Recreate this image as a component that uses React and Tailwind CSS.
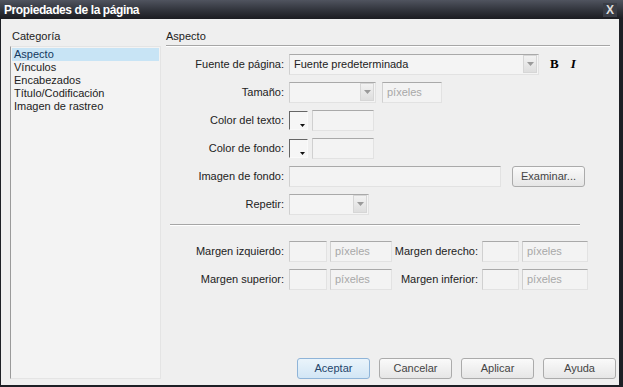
import React from "react";

const font = { fontFamily: '"Liberation Sans", Arial, sans-serif' };

function Field({ w, text, disabled }) {
  return (
    <div
      className={`h-[21px] ${w} border border-[#e2e2e2] border-t-[#a9a9a9] border-l-[#d0d0d0] bg-[#f3f3f3] flex items-center px-[4px] text-[11px] ${
        disabled ? "text-[#a8a8a8]" : "text-[#222]"
      }`}
    >
      {text}
    </div>
  );
}

function Select({ w, text }) {
  return (
    <div
      className={`h-[21px] ${w} border border-[#e2e2e2] border-t-[#a9a9a9] border-l-[#d0d0d0] bg-[#f4f4f4] flex items-center text-[11px] text-[#222]`}
    >
      <span className="flex-1 px-[4px]">{text}</span>
      <div className="w-[14px] h-[18px] mr-[1px] bg-gradient-to-b from-[#f2f2f2] to-[#dedede] border border-[#d6d6d6] flex items-center justify-center">
        <svg width="7" height="4" viewBox="0 0 7 4">
          <path d="M0 0h7L3.5 4z" fill="#9a9a9a" />
        </svg>
      </div>
    </div>
  );
}

function Swatch() {
  return (
    <div className="relative w-[19px] h-[19px] border border-[#fafafa] border-l-[#666] border-t-[#666] bg-[#f6f6f6]">
      <svg className="absolute right-[2px] bottom-[2px]" width="5" height="3" viewBox="0 0 5 3">
        <path d="M0 0h5L2.5 3z" fill="#111" />
      </svg>
    </div>
  );
}

function Button({ children, primary }) {
  return (
    <button
      className={`w-[73px] h-[21px] rounded-[3px] border text-[11px] ${
        primary
          ? "border-[#8fb4d8] bg-gradient-to-b from-[#eaf4fb] to-[#d2e6f5] text-[#24456b]"
          : "border-[#ababab] bg-gradient-to-b from-[#fafafa] to-[#e6e6e6] text-[#444]"
      }`}
    >
      {children}
    </button>
  );
}

function Row({ label, children }) {
  return (
    <div className="h-[28px] flex items-center">
      <div className="w-[122px] text-right pr-[4px] text-[11px] text-[#222] whitespace-nowrap">{label}</div>
      <div className="flex items-center ml-[1px]">{children}</div>
    </div>
  );
}

export default function App() {
  const categories = ["Aspecto", "Vínculos", "Encabezados", "Título/Codificación", "Imagen de rastreo"];

  return (
    <div className="w-[623px] h-[387px] bg-[#1d1f25] flex flex-col overflow-hidden" style={font}>
      {/* title bar */}
      <div className="h-[19px] flex items-center justify-between bg-gradient-to-b from-[#50545f] via-[#33363e] to-[#1b1c21] pl-[4px] pr-[6px]">
        <span className="text-white font-bold text-[12px] tracking-[-0.4px]">Propiedades de la página</span>
        <span className="w-[14px] h-[14px] flex items-center justify-center bg-[#3a3d46] text-[#dcdcdc] font-bold text-[12px]">X</span>
      </div>

      <div className="flex-1 ml-[1px] mr-[4px] mb-[2px] bg-[#efefef] flex text-[11px] text-[#222]">
        {/* categories */}
        <div className="w-[160px] pl-[9px] pt-[11px] pb-[6px] flex flex-col">
          <div className="h-[15px] pl-[2px] leading-[13px]">Categoría</div>
          <div className="flex-1 mt-[1px] border border-[#e4e4e4] border-l-[#9a9a9a] bg-[#f3f3f3] pt-[1px] px-[1px]">
            {categories.map((c, i) => (
              <div
                key={c}
                className={`h-[13px] leading-[13px] pl-[2px] ${i === 0 ? "bg-[#c8e4f5] text-[#14385e]" : ""}`}
              >
                {c}
              </div>
            ))}
          </div>
        </div>

        {/* properties */}
        <div className="flex-1 pl-[5px] pt-[11px] pr-[9px] flex flex-col">
          <div className="h-[15px] leading-[13px]">Aspecto</div>
          <div className="h-[2px] border-t border-[#a6a6a6] border-b-white border-b" />

          <div className="mt-[3px]">
            <Row label="Fuente de página:">
              <Select w="w-[250px]" text="Fuente predeterminada" />
              <span className="ml-[11px] font-bold text-[13px] text-black" style={{ fontFamily: '"Liberation Serif", serif' }}>B</span>
              <span className="ml-[12px] italic font-bold text-[13px] text-black" style={{ fontFamily: '"Liberation Serif", serif' }}>I</span>
            </Row>
            <Row label="Tamaño:">
              <Select w="w-[87px]" text="" />
              <div className="ml-[6px]">
                <Field w="w-[60px]" text="píxeles" disabled />
              </div>
            </Row>
            <Row label="Color del texto:">
              <Swatch />
              <div className="ml-[4px]">
                <Field w="w-[62px]" text="" />
              </div>
            </Row>
            <Row label="Color de fondo:">
              <Swatch />
              <div className="ml-[4px]">
                <Field w="w-[62px]" text="" />
              </div>
            </Row>
            <Row label="Imagen de fondo:">
              <Field w="w-[212px]" text="" />
              <div className="ml-[11px]">
                <Button>Examinar...</Button>
              </div>
            </Row>
            <Row label="Repetir:">
              <Select w="w-[80px]" text="" />
            </Row>
          </div>

          <div className="mt-[6px] ml-[4px] w-[410px] h-[2px] border-t border-[#a6a6a6] border-b border-b-white" />

          <div className="mt-[11px]">
            {[
              ["Margen izquierdo:", "Margen derecho:"],
              ["Margen superior:", "Margen inferior:"],
            ].map(([a, b]) => (
              <Row key={a} label={a}>
                <Field w="w-[38px]" text="" />
                <div className="ml-[3px]">
                  <Field w="w-[62px]" text="píxeles" disabled />
                </div>
                <div className="w-[90px] text-right pr-[4px] whitespace-nowrap">{b}</div>
                <Field w="w-[37px]" text="" />
                <div className="ml-[3px]">
                  <Field w="w-[66px]" text="píxeles" disabled />
                </div>
              </Row>
            ))}
          </div>

          <div className="mt-auto mb-[6px] flex justify-end gap-[9px] mr-[-6px]">
            <Button primary>Aceptar</Button>
            <Button>Cancelar</Button>
            <Button>Aplicar</Button>
            <Button>Ayuda</Button>
          </div>
        </div>
      </div>
    </div>
  );
}
